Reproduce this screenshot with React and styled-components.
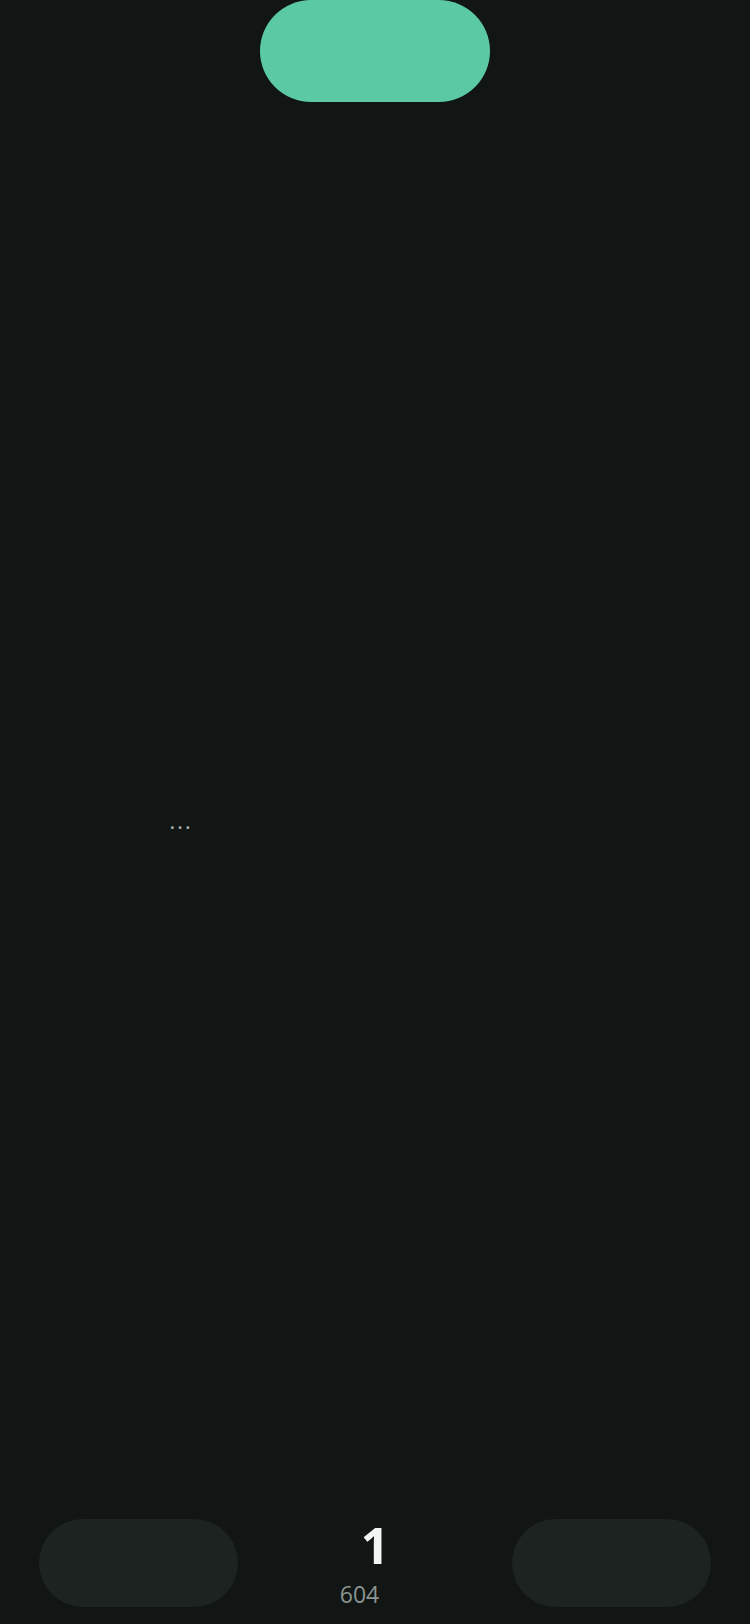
import React from "react";
import styled, { createGlobalStyle } from "styled-components";

const GlobalStyle = createGlobalStyle`
  html, body {
    margin: 0;
    padding: 0;
    background: #111614;
  }
  body {
    font-family: "Open Sans", "Noto Sans", sans-serif;
  }
`;

const Screen = styled.div`
  height: 1624px;
  display: flex;
  flex-direction: column;
  background: #111614;
  overflow: hidden;
`;

const TopBar = styled.div`
  display: flex;
  justify-content: center;
`;

const Pill = styled.button`
  width: 230px;
  height: 102px;
  border: none;
  border-radius: 51px;
  background: ${(p) => p.bg || "#5cc9a5"};
  cursor: pointer;
`;

const Main = styled.div`
  flex: 1;
  display: flex;
  align-items: flex-start;
  padding: 713px 0 0 170px;
`;

const Loading = styled.span`
  font-size: 16px;
  line-height: 16px;
  letter-spacing: 3.2px;
  color: #a7afab;
  font-weight: 700;
`;

const Footer = styled.div`
  display: flex;
  justify-content: space-between;
  align-items: flex-end;
  padding: 0 39px 17px;
`;

const SideButton = styled.button`
  width: 199px;
  height: 88px;
  border: none;
  border-radius: 44px;
  background: #1d2320;
  cursor: pointer;
`;

const Counter = styled.div`
  display: flex;
  flex-direction: column;
  align-items: center;
  gap: 17px;
  padding-bottom: 1px;
`;

const Count = styled.div`
  font-size: 50px;
  line-height: 40px;
  font-weight: 700;
  color: #f2f5f3;
`;

const Total = styled.div`
  font-size: 23px;
  line-height: 24px;
  color: #8a9490;
  margin-right: 31px;
`;

export default function App() {
  return (
    <>
      <GlobalStyle />
      <Screen>
        <TopBar>
          <Pill aria-label="action" />
        </TopBar>
        <Main>
          <Loading>...</Loading>
        </Main>
        <Footer>
          <SideButton aria-label="previous" />
          <Counter>
            <Count>1</Count>
            <Total>604</Total>
          </Counter>
          <SideButton aria-label="next" />
        </Footer>
      </Screen>
    </>
  );
}
